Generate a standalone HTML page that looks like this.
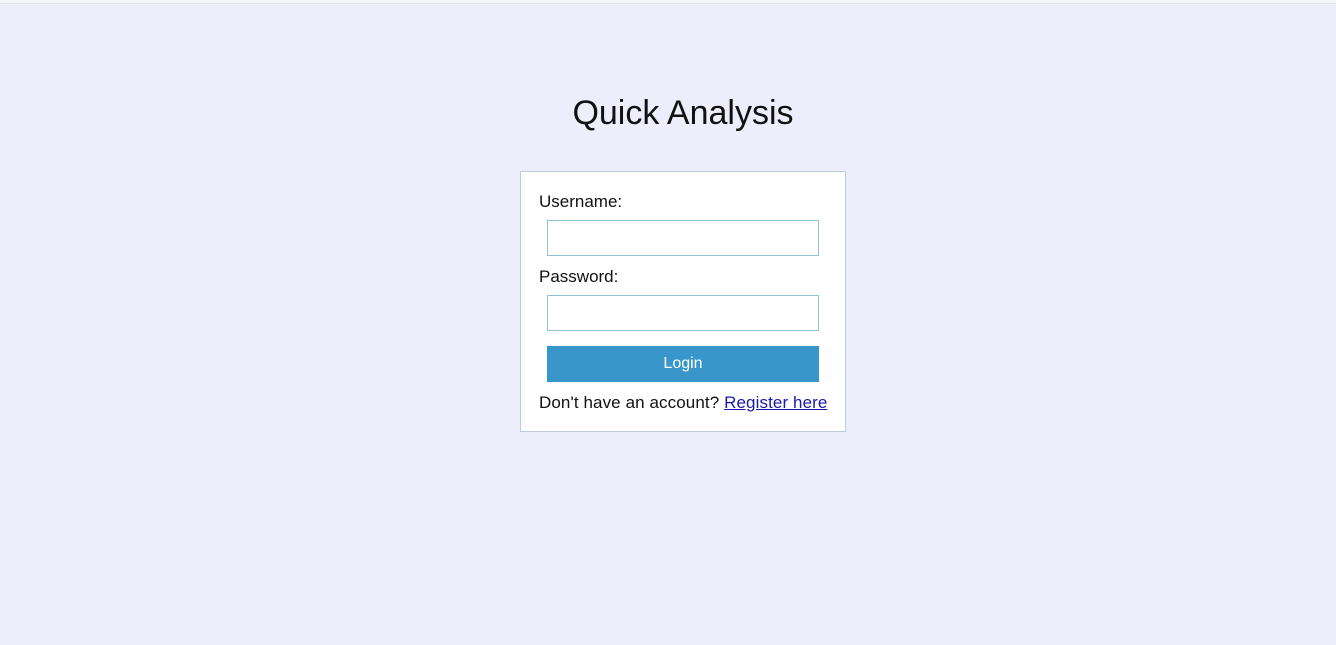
<!DOCTYPE html>
<html><head><style>
html,body{margin:0;padding:0}
body{width:1336px;height:645px;background:#eeedfc;font-family:"Liberation Sans",sans-serif;position:relative;overflow:hidden;color:#111}
.top{position:absolute;left:0;top:0;width:1336px;height:3px;background:#f5f5f7;border-bottom:1px solid #e0e0e6}
h1{position:absolute;top:94px;left:0;width:1366px;margin:0;text-align:center;font-weight:normal;font-size:34px;color:#111}
.box{position:absolute;left:520px;top:171px;width:324px;height:259px;background:#fff;border:1px solid #bccbe0}
.lbl{position:absolute;left:18px;font-size:17px}
.inp{position:absolute;left:26px;width:270px;height:34px;border:1px solid #8fc4d8;background:#fff}
.btn{position:absolute;left:26px;top:174px;width:272px;height:36px;background:#3996cb;color:#fff;font-size:16px;text-align:center;line-height:35px}
.foot{position:absolute;left:18px;top:221px;font-size:17px;white-space:nowrap;letter-spacing:0.1px}
.foot a{color:#1a1aa8;text-decoration:underline}
</style></head><body>
<div class="top"></div>
<h1>Quick Analysis</h1>
<div class="box">
<div class="lbl" style="top:20px">Username:</div>
<div class="inp" style="top:48px"></div>
<div class="lbl" style="top:95px">Password:</div>
<div class="inp" style="top:123px"></div>
<div class="btn">Login</div>
<div class="foot">Don't have an account? <a>Register here</a></div>
</div>
</body></html>
